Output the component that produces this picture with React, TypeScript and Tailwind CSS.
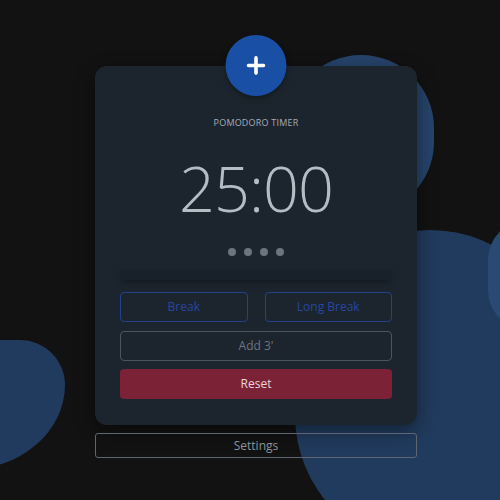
import React from 'react';

// Pomodoro timer card on a dark canvas with soft blue blobs behind it
const App: React.FC = () => {
  const dots = [0, 1, 2, 3];

  return (
    <div
      className="relative w-[500px] h-[500px] overflow-hidden bg-[#121212] flex flex-col items-center pt-[66px] pl-[12px]"
      style={{ fontFamily: '"Open Sans", "Noto Sans", sans-serif' }}
    >
      {/* background blobs */}
      <div className="absolute left-[288px] top-[55px] w-[146px] h-[160px] rounded-full bg-[#27446b]" />
      <div className="absolute left-[295px] top-[230px] w-[270px] h-[320px] rounded-full bg-[#213b5e]" />
      <div className="absolute left-[488px] top-[220px] w-[80px] h-[110px] rounded-full bg-[#2a4a75]" />
      <div className="absolute left-[-60px] top-[340px] w-[125px] h-[130px] rounded-tr-[45px] rounded-br-[100px_85px] bg-[#213b5e]" />

      {/* card */}
      <div className="relative z-10 w-[322px] h-[359px] rounded-xl bg-[#1c252e] shadow-[0_6px_20px_rgba(0,0,0,0.45)] flex flex-col items-center pt-[51px] px-[25px]">
        <button className="absolute left-1/2 -translate-x-1/2 -top-[31px] w-[61px] h-[61px] rounded-full bg-[#1a4fa6] flex items-center justify-center shadow-[0_2px_6px_rgba(0,0,0,0.4)]">
          <svg width="19" height="19" viewBox="0 0 20 20">
            <path d="M10 2v16M2 10h16" stroke="#fff" strokeWidth="3.8" strokeLinecap="round" />
          </svg>
        </button>

        <p className="text-[9px] leading-[12px] tracking-[0.2px] text-[#a3acb6] uppercase">Pomodoro Timer</p>

        <p className="mt-[27px] text-[63px] leading-[64px] font-light text-[#b4bcc4] tracking-[-1px]">25:00</p>

        <div className="mt-[28px] flex gap-[8px]">
          <>
            {dots.map((d) => (
              <span key={d} className="w-[8px] h-[8px] rounded-full bg-[#6b7580]" />
            ))}
          </>
        </div>

        <div className="mt-[14px] w-full h-[10px] rounded-full bg-[#182029] shadow-[0_3px_6px_rgba(0,0,0,0.3)]" />

        <div className="mt-[12px] w-full flex gap-[17px]">
          <button className="flex-1 h-[30px] rounded border border-[#24408c] text-[12px] text-[#2646a0]">Break</button>
          <button className="flex-1 h-[30px] rounded border border-[#24408c] text-[12px] text-[#2646a0]">Long Break</button>
        </div>

        <button className="mt-[9px] w-full h-[30px] rounded border border-[#4a5561] text-[12px] text-[#6b7480]">Add 3'</button>

        <button className="mt-[8px] w-full h-[30px] rounded bg-[#7c2237] text-[12px] text-[#ead6da]">Reset</button>
      </div>

      <button className="relative z-10 mt-[8px] w-[322px] h-[25px] rounded-[3px] border border-[#5d6672] text-[12px] text-[#8b929b]">
        Settings
      </button>
    </div>
  );
};

export default App;
